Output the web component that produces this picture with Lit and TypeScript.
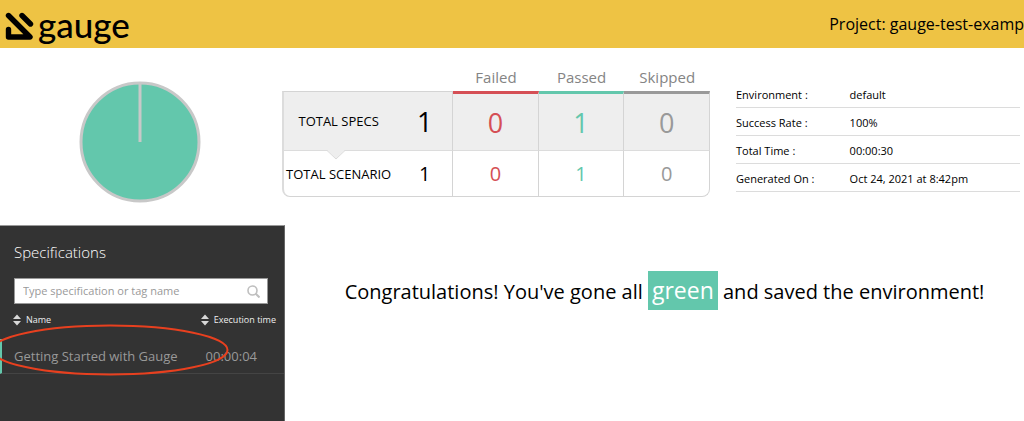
import { LitElement, html, css, svg } from "lit";
import { customElement, property } from "lit/decorators.js";
import { classMap } from "lit/directives/class-map.js";

const sortIcon = html`<svg class="sort" width="8" height="12" viewBox="0 0 8 12" aria-hidden="true">
  ${svg`<path d="M4 0.5 8 5H0zM0 7h8L4 11.5z" fill="#d8d8d8"/>`}
</svg>`;

@customElement("report-header")
class ReportHeader extends LitElement {
  @property() project = "";

  static styles = css`
    :host {
      display: flex;
      align-items: center;
      justify-content: space-between;
      height: 48px;
      padding-left: 5px;
      background: #eec344;
      color: #000;
      box-sizing: border-box;
    }
    .brand {
      display: flex;
      align-items: flex-end;
      gap: 4px;
      color: inherit;
      text-decoration: none;
    }
    .word {
      font: 500 35px/44px Lato, sans-serif;
    }
    .mark {
      margin-bottom: 5px;
    }
    .project {
      font-size: 16px;
      white-space: nowrap;
      overflow: hidden;
    }
  `;

  render() {
    return html`
      <a class="brand" href="#" aria-label="gauge">
        <svg class="mark" width="29" height="29" viewBox="0 0 29 29" fill="none" stroke="#000" stroke-width="5.400" stroke-linecap="round" stroke-linejoin="round" aria-hidden="true">
          <path d="M3.500 3.500 25 25H3.500V17.500" />
          <path d="M17 3.500 25.500 12" />
        </svg>
        <span class="word">gauge</span>
      </a>
      <div class="project">Project: ${this.project}</div>
    `;
  }
}

@customElement("result-table")
class ResultTable extends LitElement {
  static styles = css`
    table {
      width: 100%;
      border-collapse: separate;
      border-spacing: 0;
      table-layout: fixed;
    }
    .label {
      width: 26%;
    }
    .total {
      width: 14%;
    }
    th,
    td {
      box-sizing: border-box;
      padding: 0;
      font-weight: 400;
      text-align: center;
      white-space: nowrap;
    }
    thead th {
      height: 24px;
      padding-bottom: 4px;
      font-size: 15px;
      line-height: 20px;
      color: #848484;
    }
    tbody th {
      font-size: 13px;
      color: #000;
      border-left: 2px solid #dcdcdc;
    }
    tbody td {
      border-right: 1px solid #d4d4d4;
    }
    tbody th + td {
      padding-left: 4px;
    }
    .specs th,
    .specs td {
      height: 60px;
      background: #eee;
      border-top: 1px solid #d4d4d4;
      border-bottom: 1px solid #dcdcdc;
      font-size: 27px;
    }
    .specs th {
      position: relative;
      font-size: 13px;
    }
    .specs .failed {
      border-top: 3px solid #d54f55;
    }
    .specs .passed {
      border-top: 3px solid #63c7ac;
    }
    .specs .skipped {
      border-top: 3px solid #999;
    }
    .scenarios th,
    .scenarios td {
      height: 46px;
      border-bottom: 1px solid #d4d4d4;
      font-size: 20px;
    }
    .scenarios th {
      font-size: 13px;
      border-bottom-left-radius: 8px;
    }
    .scenarios td:last-child {
      border-bottom-right-radius: 8px;
    }
    .notch {
      position: absolute;
      left: 50%;
      bottom: -10px;
      margin-left: -12px;
    }
    .failed {
      color: #d54f55;
    }
    .passed {
      color: #63c7ac;
    }
    .skipped {
      color: #999;
    }
  `;

  render() {
    return html`
      <table>
        <thead>
          <tr>
            <th class="label"></th>
            <th class="total"></th>
            <th>Failed</th>
            <th>Passed</th>
            <th>Skipped</th>
          </tr>
        </thead>
        <tbody>
          <tr class="specs">
            <th scope="row">
              TOTAL SPECS
              <svg class="notch" width="18" height="10" viewBox="0 0 18 10" aria-hidden="true">
                <path d="M0 0H18L9 9z" fill="#eee" />
                <path d="M0 .5 9 9 18 .5" fill="none" stroke="#dcdcdc" />
              </svg>
            </th>
            <td>1</td>
            <td class="failed">0</td>
            <td class="passed">1</td>
            <td class="skipped">0</td>
          </tr>
          <tr class="scenarios">
            <th scope="row">TOTAL SCENARIO</th>
            <td>1</td>
            <td class="failed">0</td>
            <td class="passed">1</td>
            <td class="skipped">0</td>
          </tr>
        </tbody>
      </table>
    `;
  }
}

@customElement("run-details")
class RunDetails extends LitElement {
  static styles = css`
    dl {
      margin: 0;
      font-size: 11px;
      line-height: 15px;
      color: #000;
    }
    .row {
      display: grid;
      grid-template-columns: 2fr 3fr;
      padding: 7px 0 5px;
      border-bottom: 1px solid #dcdcdc;
    }
    dt,
    dd {
      margin: 0;
      white-space: nowrap;
    }
  `;

  private rows = [
    ["Environment", "default"],
    ["Success Rate", "100%"],
    ["Total Time", "00:00:30"],
    ["Generated On", "Oct 24, 2021 at 8:42pm"],
  ];

  render() {
    return html`<dl>
      ${this.rows.map(([k, v]) => html`<div class="row"><dt>${k} :</dt><dd>${v}</dd></div>`)}
    </dl>`;
  }
}

@customElement("spec-sidebar")
class SpecSidebar extends LitElement {
  static styles = css`
    :host {
      display: block;
      position: relative;
      box-sizing: border-box;
      background: #333;
      color: #fff;
      border-top: 1px solid #999;
      border-right: 1px solid #666;
      padding-top: 14px;
      overflow: hidden;
    }
    h2 {
      margin: 0 14px 14px;
      font-size: 15px;
      line-height: 24px;
      font-weight: 300;
    }
    .search {
      display: flex;
      align-items: center;
      margin: 0 16px 0 14px;
      height: 26px;
      box-sizing: border-box;
      padding: 0 7px 0 8px;
      background: #fff;
      border: 1px solid #999;
    }
    .search input {
      flex: 1;
      min-width: 0;
      border: 0;
      padding: 0;
      outline: 0;
      background: none;
      font: 11px/16px "Open Sans", sans-serif;
      color: #333;
    }
    .search input::placeholder {
      color: #999;
      opacity: 1;
    }
    .sorts {
      display: flex;
      justify-content: space-between;
      padding: 8px 8px 0 13px;
    }
    .sorts button {
      display: flex;
      align-items: center;
      gap: 5px;
      border: 0;
      padding: 0;
      background: none;
      color: #eee;
      font: 9px/16px "Open Sans", sans-serif;
    }
    ul {
      list-style: none;
      margin: 11px 0 0;
      padding: 0;
    }
    .spec {
      display: flex;
      justify-content: space-between;
      align-items: center;
      height: 35px;
      box-sizing: border-box;
      padding: 0 27px 0 12px;
      border-bottom: 1px solid #444;
      border-left: 2px solid #666;
      font-size: 13px;
      line-height: 20px;
      color: #999;
      text-decoration: none;
    }
    .spec.passed {
      border-left-color: #63c7ac;
    }
    .highlight {
      position: absolute;
      left: -10px;
      top: 97px;
    }
  `;

  private specs = [{ name: "Getting Started with Gauge", time: "00:00:04", passed: true }];

  render() {
    return html`
      <h2>Specifications</h2>
      <div class="search">
        <input type="text" aria-label="Search specifications" placeholder="Type specification or tag name" />
        <svg width="13" height="13" viewBox="0 0 13 13" fill="none" stroke="#bfbfbf" stroke-width="1.600" aria-hidden="true">
          <circle cx="5.500" cy="5.500" r="4.500" />
          <path d="m8.500 8.500 4 4" stroke-width="2" />
        </svg>
      </div>
      <div class="sorts">
        <button type="button">${sortIcon}Name</button>
        <button type="button">${sortIcon}Execution time</button>
      </div>
      <ul>
        ${this.specs.map(
          (s) => html`<li>
            <a href="#" class=${classMap({ spec: true, passed: s.passed })}>
              <span>${s.name}</span><span>${s.time}</span>
            </a>
          </li>`
        )}
      </ul>
      <svg class="highlight" width="240" height="54" viewBox="0 0 240 54" fill="none" aria-hidden="true">
        <ellipse cx="120" cy="27" rx="117.500" ry="24.500" stroke="#e8401f" stroke-width="2" />
      </svg>
    `;
  }
}

@customElement("app-root")
class AppRoot extends LitElement {
  static styles = css`
    :host {
      display: flex;
      flex-direction: column;
      min-height: 100vh;
      background: #fff;
      font-family: "Open Sans", sans-serif;
      overflow: hidden;
    }
    .summary {
      display: grid;
      grid-template-columns: 280fr 428fr 308fr;
      column-gap: 2px;
      padding: 19px 4px 22px 0;
    }
    .chart {
      justify-self: center;
      margin-top: 14px;
    }
    .details {
      padding: 13px 0 0 24px;
    }
    .body {
      flex: 1;
      display: grid;
      grid-template-columns: 285fr 739fr;
    }
    .message {
      margin: 0;
      padding: 46px 0 0 20px;
      text-align: center;
      font-size: 20px;
      line-height: 39px;
      color: #000;
    }
    .green {
      display: inline-block;
      padding: 0 4px;
      background: #63c7ac;
      color: #fff;
      font-size: 23px;
    }
  `;

  render() {
    return html`
      <report-header project="gauge-test-examp"></report-header>
      <section class="summary">
        <svg class="chart" width="122" height="122" viewBox="0 0 122 122" role="img" aria-label="All specifications passed">
          <circle cx="61" cy="61" r="59" fill="#63c7ac" stroke="#c8c8c8" stroke-width="3" />
          <path d="M61 2V61" stroke="#c8c8c8" stroke-width="3" />
        </svg>
        <result-table></result-table>
        <run-details class="details"></run-details>
      </section>
      <main class="body">
        <spec-sidebar></spec-sidebar>
        <p class="message">
          Congratulations! You've gone all <span class="green">green</span> and saved the environment!
        </p>
      </main>
    `;
  }
}
